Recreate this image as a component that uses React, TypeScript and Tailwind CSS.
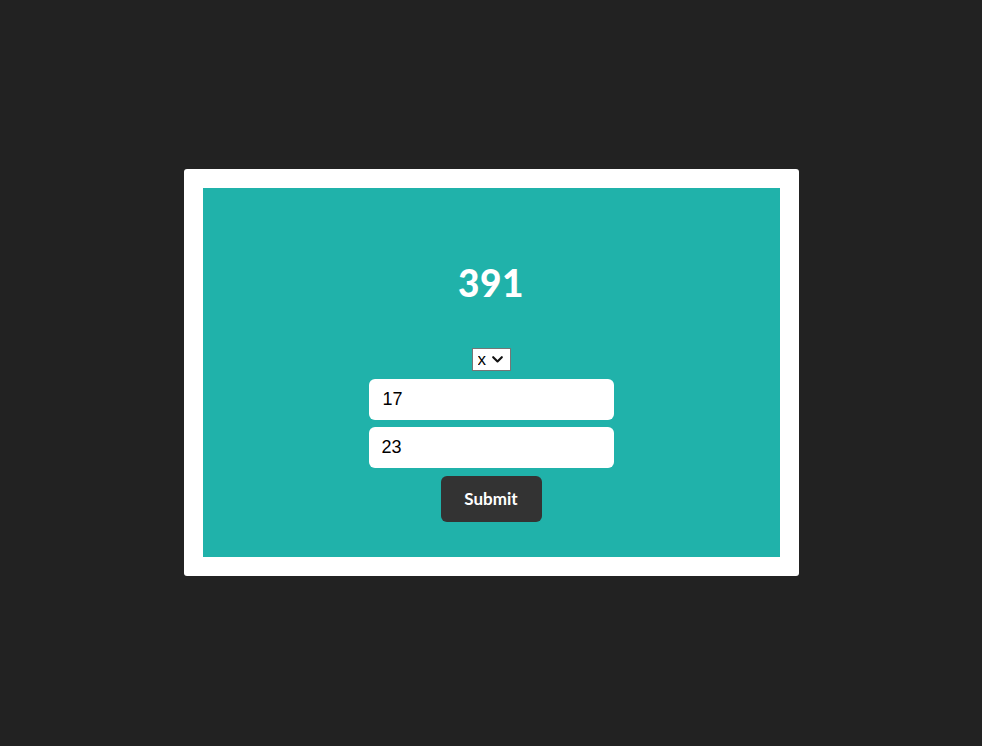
import React, { useState } from 'react';

export default function App() {
  const [op, setOp] = useState('x');
  const [a, setA] = useState('17');
  const [b, setB] = useState('23');

  return (
    <div className="min-h-screen w-full bg-[#222222] flex justify-center pt-[169px]">
      <div className="w-[615px] h-[407px] bg-white rounded-[3px] p-[19px]">
        <div className="h-full w-full bg-[#20b2aa] flex flex-col items-center pt-[75px]">
          <h1 className="text-[37px] leading-[40px] font-black text-white font-['Lato',sans-serif] tracking-[0.5px]">
            391
          </h1>
          <form
            className="flex flex-col items-center gap-2 mt-[44px]"
            onSubmit={(e) => e.preventDefault()}
          >
            <div className="relative">
              <select
                value={op}
                onChange={(e) => setOp(e.target.value)}
                className="appearance-none h-[23px] w-[39px] bg-white border border-[#767676] text-black text-[17px] leading-none font-['Liberation_Sans',Arial,sans-serif] pl-[5px]"
              >
                <option value="+">+</option>
                <option value="-">-</option>
                <option value="x">x</option>
                <option value="/">/</option>
              </select>
              <svg
                className="pointer-events-none absolute right-[8px] top-[9px]"
                width="11"
                height="7"
                viewBox="0 0 11 7"
                fill="none"
              >
                <path d="M1.2 1.2 L5.5 5.5 L9.8 1.2" stroke="#111" strokeWidth="2.1" strokeLinecap="round" strokeLinejoin="round" />
              </svg>
            </div>
            <input
              value={a}
              onChange={(e) => setA(e.target.value)}
              className="w-[245px] h-[41px] bg-white rounded-[6px] px-[14px] text-[18px] text-black font-['Liberation_Sans',Arial,sans-serif] outline-none"
            />
            <input
              value={b}
              onChange={(e) => setB(e.target.value)}
              className="w-[245px] h-[41px] bg-white rounded-[6px] px-[13px] text-[18px] text-black font-['Liberation_Sans',Arial,sans-serif] outline-none -mt-[1px]"
            />
            <button
              type="submit"
              className="w-[101px] h-[46px] bg-[#333333] rounded-[6px] text-white text-[17px] font-bold font-['Lato',sans-serif]"
            >
              Submit
            </button>
          </form>
        </div>
      </div>
    </div>
  );
}
